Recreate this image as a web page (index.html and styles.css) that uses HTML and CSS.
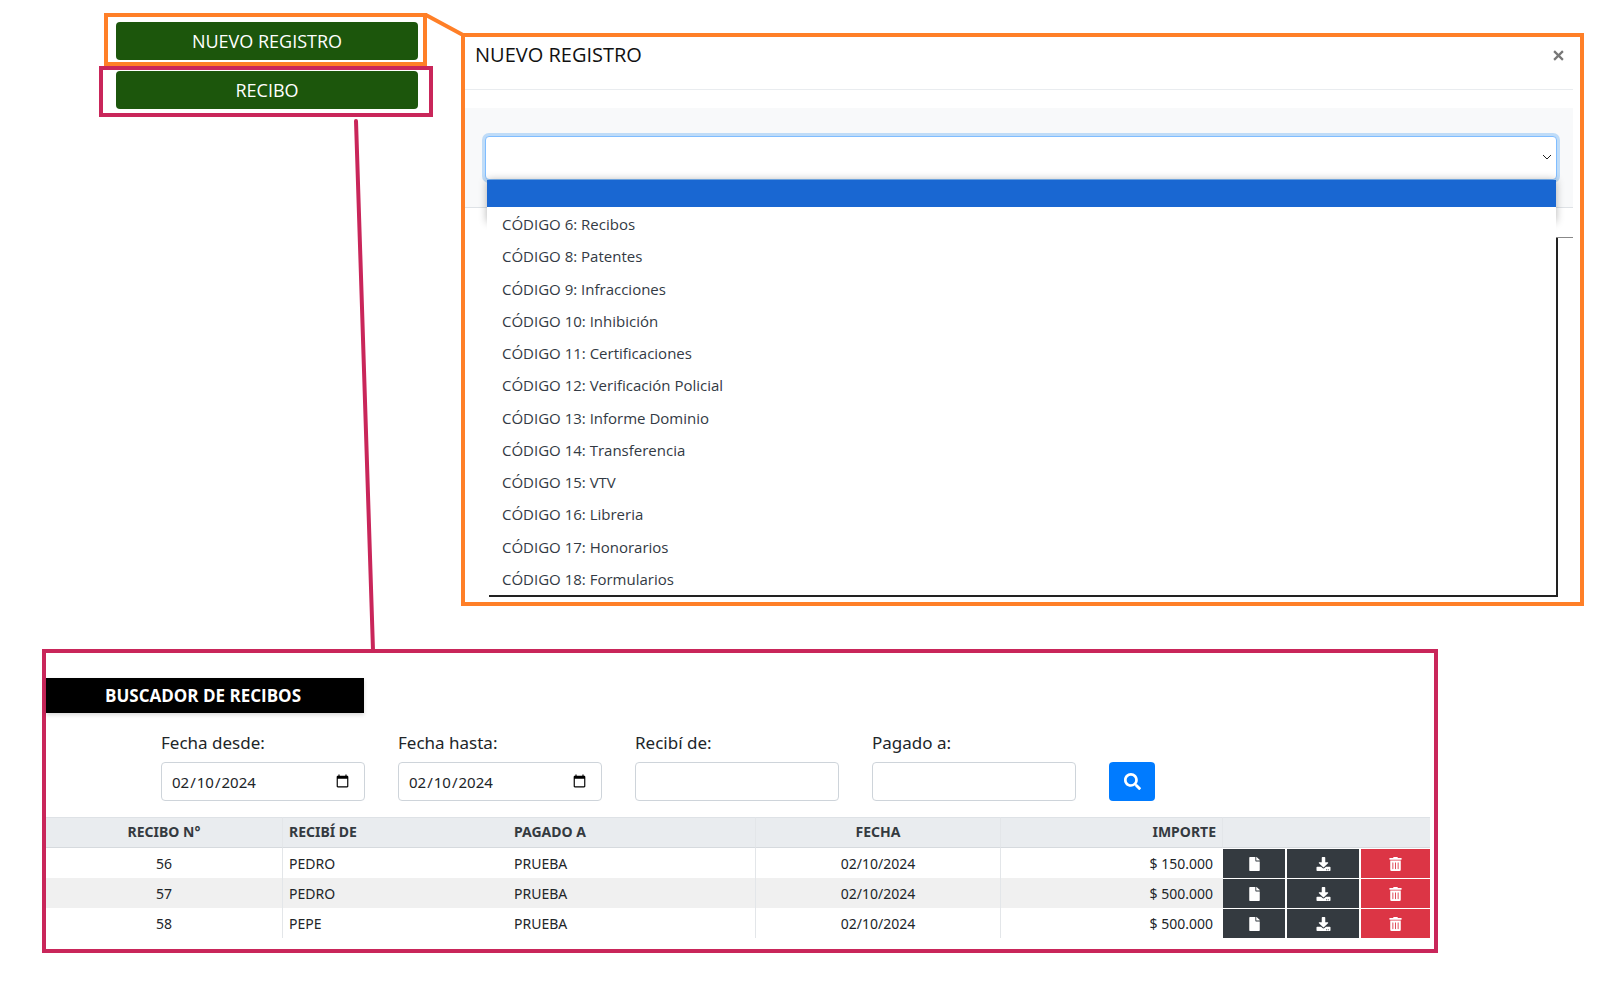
FILE: index.html
```html
<!DOCTYPE html>
<html lang="es">
<head>
<meta charset="utf-8">
<title>Recibos</title>
<meta name="viewport" content="width=device-width, initial-scale=1">
<link rel="stylesheet" href="styles.css">
</head>
<body>
<svg class="symbols" aria-hidden="true">
  <symbol id="file" viewBox="0 0 384 512"><path d="M224 136V0H24C10.700 0 0 10.700 0 24v464c0 13.300 10.700 24 24 24h336c13.300 0 24-10.700 24-24V160H248c-13.200 0-24-10.800-24-24zm160-14.100v6.100H256V0h6.100c6.400 0 12.500 2.500 17 7l97.900 98c4.500 4.500 7 10.600 7 16.900z"/></symbol>
  <symbol id="download" viewBox="0 0 512 512"><path d="M216 0h80c13.300 0 24 10.700 24 24v168h87.700c17.800 0 26.700 21.500 14.100 34.100L269.700 378.300c-7.500 7.500-19.800 7.500-27.300 0L90.100 226.100c-12.600-12.600-3.700-34.100 14.100-34.100H192V24c0-13.300 10.700-24 24-24zm296 376v112c0 13.300-10.700 24-24 24H24c-13.300 0-24-10.700-24-24V376c0-13.300 10.700-24 24-24h146.700l49 49c20.100 20.100 52.500 20.100 72.600 0l49-49H488c13.300 0 24 10.700 24 24zm-124 88c0-11-9-20-20-20s-20 9-20 20 9 20 20 20 20-9 20-20zm64 0c0-11-9-20-20-20s-20 9-20 20 9 20 20 20 20-9 20-20z"/></symbol>
  <symbol id="trash" viewBox="0 0 448 512"><path d="M32 464a48 48 0 0 0 48 48h288a48 48 0 0 0 48-48V128H32zm272-256a16 16 0 0 1 32 0v224a16 16 0 0 1-32 0zm-96 0a16 16 0 0 1 32 0v224a16 16 0 0 1-32 0zm-96 0a16 16 0 0 1 32 0v224a16 16 0 0 1-32 0zM432 32H312l-9.400-18.700A24 24 0 0 0 281.100 0H166.800a23.700 23.700 0 0 0-21.400 13.300L136 32H16A16 16 0 0 0 0 48v32a16 16 0 0 0 16 16h416a16 16 0 0 0 16-16V48a16 16 0 0 0-16-16z"/></symbol>
  <symbol id="search" viewBox="0 0 512 512"><path d="M505 442.700L405.300 343c-4.500-4.500-10.600-7-17-7H372c27.600-35.300 44-79.700 44-128C416 93.100 322.900 0 208 0S0 93.100 0 208s93.100 208 208 208c48.300 0 92.700-16.400 128-44v16.300c0 6.400 2.500 12.500 7 17l99.700 99.700c9.400 9.400 24.600 9.400 33.900 0l28.300-28.300c9.400-9.400 9.400-24.600.1-34zM208 336c-70.700 0-128-57.200-128-128 0-70.700 57.200-128 128-128 70.700 0 128 57.200 128 128 0 70.700-57.200 128-128 128z"/></symbol>
</svg>

<main>
  <div class="top">
    <nav class="actions">
      <div class="mark mark-new"><button class="btn-green" type="button">NUEVO REGISTRO</button></div>
      <div class="mark mark-receipt"><button class="btn-green" type="button">RECIBO</button></div>
    </nav>

    <section class="dialog" aria-labelledby="dialog-title">
      <header class="dialog-head">
        <h2 id="dialog-title">NUEVO REGISTRO</h2>
        <button class="close" type="button" aria-label="Cerrar"><svg viewBox="0 0 10 10"><path d="M1 1l8 8M9 1L1 9"/></svg></button>
      </header>
      <div class="dialog-body">
        <div class="field">
          <select class="code-select" aria-label="Código"><option></option></select>
          <svg class="chevron" viewBox="0 0 10 6"><path d="M1 1l4 4 4-4"/></svg>
          <div class="menu">
            <div class="menu-blank"></div>
            <ul class="menu-list">
              <li>CÓDIGO 6: Recibos</li>
              <li>CÓDIGO 8: Patentes</li>
              <li>CÓDIGO 9: Infracciones</li>
              <li>CÓDIGO 10: Inhibición</li>
              <li>CÓDIGO 11: Certificaciones</li>
              <li>CÓDIGO 12: Verificación Policial</li>
              <li>CÓDIGO 13: Informe Dominio</li>
              <li>CÓDIGO 14: Transferencia</li>
              <li>CÓDIGO 15: VTV</li>
              <li>CÓDIGO 16: Libreria</li>
              <li>CÓDIGO 17: Honorarios</li>
              <li>CÓDIGO 18: Formularios</li>
            </ul>
          </div>
        </div>
      </div>
      <div class="backdrop"><div class="backdrop-frame"></div></div>
    </section>
  </div>

  <section class="panel" aria-labelledby="panel-title">
    <h2 class="panel-title" id="panel-title">BUSCADOR DE RECIBOS</h2>
    <form class="filters">
      <label class="filter">Fecha desde:<input type="date" value="2024-02-10"></label>
      <label class="filter">Fecha hasta:<input type="date" value="2024-02-10"></label>
      <label class="filter">Recibí de:<input type="text"></label>
      <label class="filter">Pagado a:<input type="text"></label>
      <button class="search" type="button" aria-label="Buscar"><svg><use href="#search"/></svg></button>
    </form>
    <table class="receipts">
      <colgroup><col class="c-num"><col class="c-from"><col><col class="c-date"><col class="c-amount"><col class="c-file"><col class="c-down"><col class="c-del"></colgroup>
      <thead>
        <tr><th class="center ruled">RECIBO N°</th><th>RECIBÍ DE</th><th class="ruled">PAGADO A</th><th class="center ruled">FECHA</th><th class="right ruled">IMPORTE</th><th colspan="3"></th></tr>
      </thead>
      <tbody>
        <tr><td class="center ruled">56</td><td>PEDRO</td><td class="ruled">PRUEBA</td><td class="center ruled">02/10/2024</td><td class="right">$ 150.000</td>
          <td class="act"><button type="button" aria-label="Ver"><svg><use href="#file"/></svg></button></td><td class="act"><button type="button" aria-label="Descargar"><svg><use href="#download"/></svg></button></td><td class="act"><button class="danger" type="button" aria-label="Eliminar"><svg><use href="#trash"/></svg></button></td></tr>
        <tr><td class="center ruled">57</td><td>PEDRO</td><td class="ruled">PRUEBA</td><td class="center ruled">02/10/2024</td><td class="right">$ 500.000</td>
          <td class="act"><button type="button" aria-label="Ver"><svg><use href="#file"/></svg></button></td><td class="act"><button type="button" aria-label="Descargar"><svg><use href="#download"/></svg></button></td><td class="act"><button class="danger" type="button" aria-label="Eliminar"><svg><use href="#trash"/></svg></button></td></tr>
        <tr><td class="center ruled">58</td><td>PEPE</td><td class="ruled">PRUEBA</td><td class="center ruled">02/10/2024</td><td class="right">$ 500.000</td>
          <td class="act"><button type="button" aria-label="Ver"><svg><use href="#file"/></svg></button></td><td class="act"><button type="button" aria-label="Descargar"><svg><use href="#download"/></svg></button></td><td class="act"><button class="danger" type="button" aria-label="Eliminar"><svg><use href="#trash"/></svg></button></td></tr>
      </tbody>
    </table>
  </section>
</main>

<svg class="connectors" width="480" height="660" aria-hidden="true">
  <path class="line-new" d="M426 15L463 35"/>
  <path class="line-receipt" d="M356 121L373 650"/>
</svg>
</body>
</html>
```
FILE: styles.css
```css
* { box-sizing: border-box; }

body {
  margin: 0;
  position: relative;
  background: #fff;
  color: #212529;
  font-family: "Open Sans", "Noto Sans", sans-serif;
  font-size: 16px;
}

h2 { margin: 0; }
button, input, select { font: inherit; color: inherit; }
button { padding: 0; border: 0; cursor: pointer; }

.symbols { display: none; }

.top {
  display: flex;
  align-items: flex-start;
  gap: 28px;
  padding: 13px 16px 0 99px;
}

/* Buttons and the coloured marks round them */
.actions { flex: 0 0 334px; }
.mark { border: 4px solid; }
.mark-new { margin: 0 6px 0 5px; padding: 5px 5px 2px 8px; border-color: #ff7f27; }
.mark-receipt { padding: 1px 11px 4px 13px; border-color: #c9265a; }
.btn-green {
  display: block;
  width: 100%;
  height: 38px;
  border-radius: 4px;
  background: #1c560c;
  color: #fff;
  font-size: 18px;
}

/* New record dialog */
.dialog {
  flex: 1;
  margin-top: 20px;
  padding-bottom: 5px;
  border: 4px solid #ff7f27;
}
.dialog-head {
  display: flex;
  justify-content: space-between;
  align-items: flex-start;
  height: 53px;
  margin-right: 7px;
  padding: 4px 9px 0 10px;
  border-bottom: 1px solid #e9ecef;
}
.dialog-head h2 {
  color: #111;
  font-size: 20px;
  font-weight: 400;
  line-height: 28px;
}
.close { height: 28px; background: none; }
.close svg {
  display: block;
  width: 11px;
  height: 11px;
  fill: none;
  stroke: #777;
  stroke-width: 2;
}
.dialog-body {
  height: 100px;
  margin: 18px 7px 0 0;
  padding: 28px 16px 0 20px;
  border-bottom: 1px solid #dee2e6;
  background: #f8f9fa;
}
.field { position: relative; }
.code-select {
  display: block;
  width: 100%;
  height: 44px;
  appearance: none;
  border: 1px solid #80bdff;
  border-radius: 4px;
  background: #fff;
  box-shadow: 0 0 0 3px #bfdcf8;
}
.chevron {
  position: absolute;
  top: 18px;
  right: 5px;
  width: 10px;
  height: 6px;
  fill: none;
  stroke: #222;
  stroke-width: 1;
}
.menu {
  position: absolute;
  z-index: 1;
  top: 44px;
  left: 2px;
  right: 1px;
  background: #fff;
}
.menu::before {
  content: "";
  position: absolute;
  z-index: -1;
  inset: 0 0 auto;
  height: 42px;
  box-shadow: 0 0 8px rgba(0, 0, 0, .3);
}
.menu-blank { height: 27px; background: #1967d2; }
.menu-list {
  display: grid;
  grid-auto-rows: 1fr;
  align-items: center;
  height: 388px;
  margin: 0;
  padding: 1px 15px 0;
  background: #fff;
  color: #333a44;
  font-size: 15px;
  line-height: 24px;
  list-style: none;
}
.backdrop {
  margin: 29px 7px 0 24px;
  border-top: 1px solid #888;
}
.backdrop-frame {
  height: 359px;
  margin-right: 15px;
  border: solid #222;
  border-width: 0 2px 2px 0;
}

/* Receipt search */
.panel {
  margin: 43px 162px 48px 42px;
  padding: 25px 4px 11px 0;
  border: 4px solid #c9265a;
}
.panel-title {
  width: 318px;
  padding-right: 4px;
  background: #000;
  box-shadow: 0 2px 4px rgba(0, 0, 0, .15);
  color: #fff;
  font-size: 17px;
  line-height: 35px;
  text-align: center;
}
.filters {
  display: flex;
  align-items: flex-end;
  gap: 33px;
  padding: 18px 0 16px 115px;
}
.filter {
  display: flex;
  flex-direction: column;
  gap: 7px;
  width: 204px;
  font-family: "Noto Sans", sans-serif;
  font-size: 17px;
  line-height: 24px;
}
.filter input {
  width: 100%;
  height: 39px;
  padding: 0 12px 0 9px;
  border: 1px solid #ced4da;
  border-radius: 4px;
  background: #fff;
  font-size: 15px;
}
.search {
  display: grid;
  place-items: center;
  width: 46px;
  height: 39px;
  border-radius: 4px;
  background: #007bff;
}
.search svg { width: 19px; height: 17px; fill: #fff; }

.receipts {
  width: 100%;
  table-layout: fixed;
  border-collapse: separate;
  border-spacing: 0;
  font-family: "Noto Sans", sans-serif;
  font-size: 14px;
}
.c-num { width: 237px; }
.c-from { width: 225px; }
.c-date { width: 245px; }
.c-amount { width: 222px; }
.c-file { width: 64px; }
.c-down { width: 74px; }
.c-del { width: 69px; }
.receipts th {
  height: 31px;
  padding: 0 6px 2px;
  border-top: 1px solid #dee2e6;
  border-bottom: 1px solid #d6dade;
  background: #e9ecef;
  color: #343a40;
  text-align: left;
}
.receipts td { height: 30px; padding: 0 6px; }
.receipts tbody tr:nth-child(even) { background: #f0f0f0; }
.receipts .center { text-align: center; }
.receipts .right { text-align: right; }
.receipts td.right { padding-right: 10px; }
.receipts .ruled { border-right: 1px solid #e3e6e9; }
.receipts .act { padding: 1px 2px 0 0; background: #fff; }
.receipts .act:last-child { padding-right: 0; }
.act button {
  display: grid;
  place-items: center;
  width: 100%;
  height: 29px;
  background: #343a40;
}
.act .danger { background: #dc3545; }
.act svg { width: 15px; height: 14px; fill: #fff; }

/* Lines from each button to the screen it opens */
.connectors {
  position: absolute;
  top: 0;
  left: 0;
  pointer-events: none;
  fill: none;
  stroke-width: 4;
  stroke-linecap: round;
}
.line-new { stroke: #ff7f27; }
.line-receipt { stroke: #c9265a; }
```
